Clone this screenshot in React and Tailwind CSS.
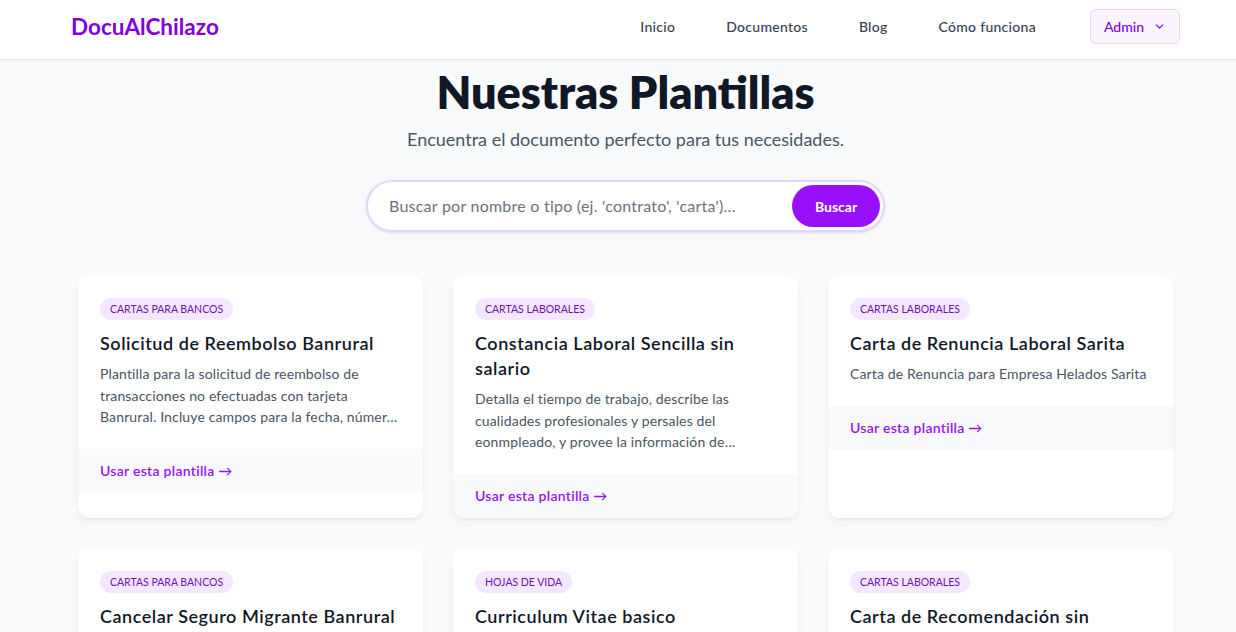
import React from "react";
import { ChevronDown } from "lucide-react";

const cards = [
  {
    tag: "Cartas para bancos",
    title: "Solicitud de Reembolso Banrural",
    desc: "Plantilla para la solicitud de reembolso de transacciones no efectuadas con tarjeta Banrural. Incluye campos para la fecha, número de tarjeta y monto.",
  },
  {
    tag: "Cartas laborales",
    title: "Constancia Laboral Sencilla sin salario",
    desc: "Detalla el tiempo de trabajo, describe las cualidades profesionales y persales del eonmpleado, y provee la información de contacto.",
  },
  {
    tag: "Cartas laborales",
    title: "Carta de Renuncia Laboral Sarita",
    desc: "Carta de Renuncia para Empresa Helados Sarita",
  },
  {
    tag: "Cartas para bancos",
    title: "Cancelar Seguro Migrante Banrural",
    desc: "Plantilla para cancelar el seguro migrante de Banrural.",
  },
  {
    tag: "Hojas de vida",
    title: "Curriculum Vitae basico",
    desc: "Un curriculum sencillo y profesional.",
  },
  {
    tag: "Cartas laborales",
    title: "Carta de Recomendación sin\nsalario",
    desc: "Carta de recomendación laboral.",
  },
];

function Card({ c }) {
  return (
    <div className="bg-white rounded-xl shadow-[0_4px_10px_-2px_rgba(0,0,0,0.08),0_2px_4px_-2px_rgba(0,0,0,0.06)] overflow-hidden">
      <div className="px-[22px] pt-[23px] pb-[21px]">
        <div className="flex">
          <span className="rounded-full bg-[#f3e8ff] text-[#6e11b0] text-[10.5px] leading-4 py-[3px] px-[10px] uppercase">
            {c.tag}
          </span>
        </div>
        <h3 className="mt-[11px] text-[18px] leading-[25px] font-semibold text-[#101828] tracking-[0.03em] whitespace-pre-line">
          {c.title}
        </h3>
        <p className="mt-[7px] text-[14px] leading-[21.5px] text-[#4a5565] tracking-[0.01em] line-clamp-3">
          {c.desc}
        </p>
      </div>
      <div className="bg-[#f9fafb] px-[22px] py-3 text-[14px] leading-5">
        <a href="#" className="block font-semibold text-[#9810fa] tracking-[0.02em]">
          Usar esta plantilla →
        </a>
      </div>
    </div>
  );
}

export default function App() {
  return (
    <div className="w-full min-h-screen overflow-hidden bg-[#f9fafb]" style={{ fontFamily: "Lato, 'Noto Sans', sans-serif" }}>
      <div className="w-[1251px]">
        <nav className="h-[60px] bg-white border-b border-[#e5e7eb] shadow-[0_1px_2px_rgba(0,0,0,0.04)]">
          <div className="h-[53px] px-[71px] flex items-center justify-between">
            <div className="text-[22.5px] font-bold text-[#8200db]">DocuAlChilazo</div>
            <div className="flex items-center">
              <div className="flex items-center gap-[51px] text-[14px] font-medium text-[#364153] tracking-[0.02em]">
                <a href="#">Inicio</a>
                <a href="#">Documentos</a>
                <a href="#">Blog</a>
                <a href="#">Cómo funciona</a>
              </div>
              <button className="ml-[54px] h-[35px] px-[13px] flex items-center gap-[9px] rounded-md border border-[#e9d4ff] bg-[#faf5ff] text-[14px] font-medium text-[#8200db]">
                Admin
                <ChevronDown size={13} strokeWidth={2} />
              </button>
            </div>
          </div>
        </nav>

        <main className="px-[78px]">
          <div className="flex flex-col items-center">
            <h1 className="mt-0 text-[45px] leading-[64px] font-extrabold text-[#101828]">
              Nuestras Plantillas
            </h1>
            <p className="mt-[1px] text-[18px] leading-7 text-[#4a5565]">
              Encuentra el documento perfecto para tus necesidades.
            </p>
            <div className="mt-[27px] w-[519px] h-[52px] rounded-full border-2 border-[#e9d4ff] bg-white shadow-sm flex items-center pl-[21px] pr-[3px]">
              <input
                className="flex-1 bg-transparent outline-none text-[16px] tracking-[0.015em] text-[#364153] placeholder:text-[#6a7282]"
                placeholder="Buscar por nombre o tipo (ej. 'contrato', 'carta')..."
              />
              <button className="h-[42px] w-[88px] rounded-full bg-[#9810fa] text-white text-[14px] font-bold">
                Buscar
              </button>
            </div>
          </div>

          <div className="mt-[43px] grid grid-cols-3 gap-[30px] pb-10">
            {cards.map((c, i) => (
              <Card key={i} c={c} />
            ))}
          </div>
        </main>
      </div>
    </div>
  );
}
